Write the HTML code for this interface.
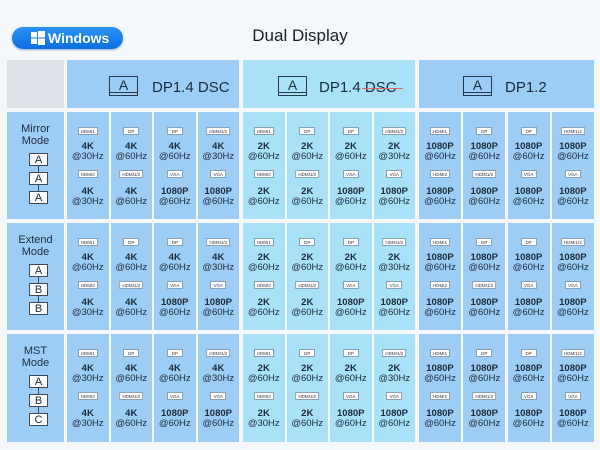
<!DOCTYPE html>
<html><head><meta charset="utf-8"><style>
*{margin:0;padding:0;box-sizing:border-box}
body{width:600px;height:450px;background:#f5f8fb;position:relative;overflow:hidden;font-family:"Liberation Sans","DejaVu Sans",sans-serif;color:#1c2b3d}
.a{position:absolute}
.win{left:12px;top:27px;width:111px;height:22px;border-radius:11px;background:linear-gradient(#2b93f5,#0c6fe0);box-shadow:0 1px 2px rgba(0,60,160,.4)}
.win span{position:absolute;left:36px;top:3px;color:#fff;font-weight:bold;font-size:14px}
.title{left:0;width:600px;top:26px;text-align:center;font-size:17px;font-weight:500;color:#15202e}
.c1{background:#9dcdf4}.c2{background:#a8e1f8}.gray{background:#dde2e8}
.hd{font-size:15px;font-weight:500}
.mon{width:29px;height:20px;border:1px solid #2a3a4c;}
.mon:after{content:"";position:absolute;left:0;right:0;bottom:2px;border-top:1px solid #2a3a4c}
.mon b{position:absolute;left:0;right:0;top:0;text-align:center;font-weight:normal;font-size:14px;line-height:17px}
.cell{text-align:center}
.bd{position:absolute;left:50%;transform:translateX(-50%);height:8px;min-width:16px;padding:0 2px;background:#fff;border:1px solid #8aa0b5;font-size:4.5px;line-height:7px;color:#334}
.v{position:absolute;left:0;right:0;font-size:9.5px;line-height:10px;text-align:center}
.v b{font-weight:bold}
.mode{font-size:11px;line-height:12px;text-align:center;font-weight:500}
.box{position:absolute;width:19px;height:13px;background:#fff;border:1px solid #3a4a5c;font-size:11px;line-height:12px;text-align:center}
.ln{position:absolute;width:1px;background:#3a4a5c}
</style></head><body>
<div class="a win"><svg class="a" style="left:19px;top:4px" width="14" height="14" viewBox="0 0 14 14"><rect x="0" y="1" width="6" height="5.5" fill="#fff"/><rect x="7" y="0" width="7" height="6.5" fill="#fff"/><rect x="0" y="7.5" width="6" height="5.5" fill="#fff"/><rect x="7" y="7.5" width="7" height="6.5" fill="#fff"/></svg><span>Windows</span></div>
<div class="a title">Dual Display</div>
<div class="a gray" style="left:7px;top:60px;width:57px;height:48px"></div>
<div id="g"></div>
<script>
var G=[[67,'c1','DP1.4 DSC',0],[243,'c2','DP1.4 DSC',1],[419,'c1','DP1.2',0]];
var IX=[42,35,44],TX=[85,76,86];
var R=[112,223,334],RH=[107,107,108];
var modes=[['Mirror','A','A','A'],['Extend','A','B','B'],['MST','A','B','C']];
var b1=['HDMI1','DP','DP','HDMI1/2'],b2=['HDMI2','HDMI1/2','VGA','VGA'];
var V=[
[[['4K',30,'4K',30],['4K',60,'4K',60],['4K',60,'1080P',60],['4K',30,'1080P',60]],
 [['2K',60,'2K',60],['2K',60,'2K',60],['2K',60,'1080P',60],['2K',30,'1080P',60]]],
[[['4K',60,'4K',30],['4K',60,'4K',60],['4K',60,'1080P',60],['4K',30,'1080P',60]],
 [['2K',60,'2K',60],['2K',60,'2K',60],['2K',60,'1080P',60],['2K',30,'1080P',60]]],
[[['4K',30,'4K',30],['4K',60,'4K',60],['4K',60,'1080P',60],['4K',30,'1080P',60]],
 [['2K',60,'2K',30],['2K',60,'2K',60],['2K',60,'1080P',60],['2K',30,'1080P',60]]]];
var h='';
G.forEach(function(g,gi){
 var w=gi==2?175:172;
 var t=g[2];
 if(g[3]) t='DP1.4 <span style="position:relative">DSC<span style="position:absolute;left:-3px;right:-6px;top:9px;border-top:1px solid #d66"></span></span>';
 h+='<div class="a '+g[1]+'" style="left:'+g[0]+'px;top:60px;width:'+w+'px;height:48px"></div>';
 h+='<div class="a mon" style="left:'+(g[0]+IX[gi])+'px;top:76px"><b>A</b></div>';
 h+='<div class="a hd" style="left:'+(g[0]+TX[gi])+'px;top:79px">'+t+'</div>';
});
R.forEach(function(y,ri){
 var m=modes[ri];
 h+='<div class="a c1" style="left:7px;top:'+y+'px;width:57px;height:'+RH[ri]+'px"><div class="mode" style="margin-top:11px">'+m[0]+'<br>Mode</div></div>';
 h+='<div class="ln" style="left:38px;top:'+(y+45)+'px;height:40px"></div>';
 for(var k=0;k<3;k++)h+='<div class="box" style="left:29px;top:'+(y+41+k*19)+'px">'+m[k+1]+'</div>';
 for(var gi=0;gi<3;gi++){
  for(var c=0;c<4;c++){
   var x=G[gi][0]+c*(gi==2?44.3:43.5), w=gi==2?42:41.5;
   var d=gi==2?['1080P',60,'1080P',60]:V[ri][gi][c];
   h+='<div class="a cell '+G[gi][1]+'" style="left:'+x+'px;top:'+y+'px;width:'+w+'px;height:'+RH[ri]+'px">'+
   '<div class="bd" style="top:15px">'+b1[c]+'</div>'+
   '<div class="v" style="top:30px"><b>'+d[0]+'</b><br>@'+d[1]+'Hz</div>'+
   '<div class="bd" style="top:58px">'+b2[c]+'</div>'+
   '<div class="v" style="top:75px"><b>'+d[2]+'</b><br>@'+d[3]+'Hz</div></div>';
  }
 }
});
document.getElementById('g').innerHTML=h;
</script>
</body></html>
